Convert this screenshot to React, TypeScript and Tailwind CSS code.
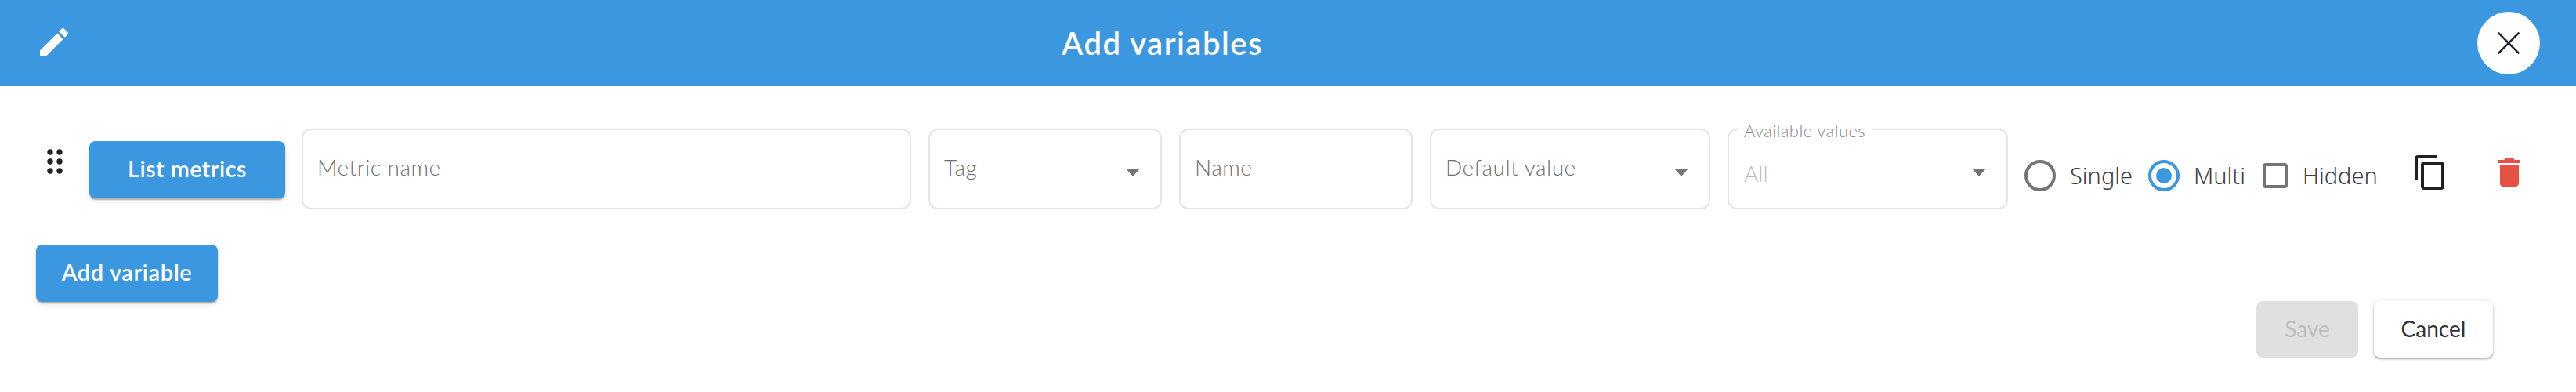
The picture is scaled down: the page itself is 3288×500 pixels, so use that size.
const sans = "font-['Lato','Liberation_Sans',sans-serif]";
const label = "font-['Noto_Sans',sans-serif] text-[29px] leading-10 font-light text-[#3d3d3d]";

function ArrowDown({ className }: { className: string }) {
  return <span className={`block h-0 w-0 border-x-[9px] border-t-[10px] border-x-transparent border-t-[#757575] ${className}`} />;
}

function Field({ label, width, select }: { label: string; width: string; select?: boolean }) {
  return (
    <div className={`flex h-[103px] items-start justify-between rounded-xl border-2 border-[#e4e4e4] pt-[30px] pr-[26px] pl-[18px] ${width}`}>
      <span className="text-[28px] leading-[34px] font-light tracking-[0.5px] text-[#6f6f6f]">{label}</span>
      {select && <ArrowDown className="mt-[19px]" />}
    </div>
  );
}

function AvailableValues() {
  return (
    <div className="relative flex h-[103px] w-[358px] items-start justify-between rounded-xl border-2 border-[#e4e4e4] pt-[38px] pr-[26px] pl-[19px]">
      <span className="absolute -top-[9px] left-[11px] bg-white px-2 text-[22px] leading-[20px] font-light tracking-[0.4px] text-[#8a8a8a]">Available values</span>
      <span className="text-[28px] leading-[34px] font-light text-[#bdbdbd]">All</span>
      <ArrowDown className="mt-[11px]" />
    </div>
  );
}

function Radio({ text, checked, width }: { text: string; checked?: boolean; width: string }) {
  return (
    <div className={`flex items-center gap-[18px] ${width}`}>
      <span className={`flex h-10 w-10 items-center justify-center rounded-full border-4 ${checked ? "border-[#3b97df]" : "border-[#757575]"}`}>
        {checked && <span className="h-5 w-5 rounded-full bg-[#3b97df]" />}
      </span>
      <span className={label}>{text}</span>
    </div>
  );
}

export default function App() {
  return (
    <div className={`h-[500px] w-[3288px] overflow-hidden bg-white ${sans}`}>
      <header className="flex h-[110px] items-center bg-[#3b97df] pr-[46px] pl-[45px]">
        <svg className="-mt-[2px]" width="48" height="48" viewBox="0 0 24 24" fill="#fff">
          <path d="M3 17.25V21h3.75L17.81 9.94l-3.75-3.75L3 17.25zM20.71 7.04c.39-.39.39-1.02 0-1.41l-2.34-2.34c-.39-.39-1.02-.39-1.41 0l-1.83 1.83 3.75 3.75 1.83-1.83z" />
        </svg>
        <h1 className="ml-[1262px] text-[40px] font-semibold tracking-[1.5px] text-white">Add variables</h1>
        <button className="ml-auto flex h-20 w-20 items-center justify-center rounded-full bg-white">
          <svg width="48" height="48" viewBox="0 0 24 24" stroke="#1f2430" strokeWidth="1.3">
            <path d="M5.3 5.3 18.7 18.7M18.7 5.3 5.3 18.7" />
          </svg>
        </button>
      </header>

      <div className="flex items-start pt-[54px] pl-[46px]">
        <svg className="mt-[26px] ml-[14px]" width="20" height="32" viewBox="0 0 20 32" fill="#212121">
          <circle cx="4" cy="4" r="3.7" /><circle cx="16" cy="4" r="3.7" />
          <circle cx="4" cy="16" r="3.7" /><circle cx="16" cy="16" r="3.7" />
          <circle cx="4" cy="28" r="3.7" /><circle cx="16" cy="28" r="3.7" />
        </svg>
        <button className="mt-[16px] ml-[34px] h-[73px] w-[250px] rounded-lg bg-[#3b97df] pb-[3px] text-[29px] font-semibold tracking-[0.4px] text-white shadow-[0_2px_2px_rgba(0,0,0,0.3),0_4px_10px_rgba(0,0,0,0.08)]">List metrics</button>
        <div className="ml-[21px] flex items-center gap-[22px]">
          <Field label="Metric name" width="w-[778px]" />
          <Field label="Tag" width="w-[298px]" select />
          <Field label="Name" width="w-[298px]" />
          <Field label="Default value" width="w-[358px]" select />
          <AvailableValues />
        </div>
        <div className="mt-[40px] ml-[21px] flex items-center">
          <Radio text="Single" width="w-[158px]" />
          <Radio text="Multi" checked width="w-[146px]" />
          <div className="flex w-[190px] items-center gap-[19px]">
            <span className="h-8 w-8 rounded border-4 border-[#757575]" />
            <span className={label}>Hidden</span>
          </div>
        </div>
        <div className="mt-[32px] flex gap-[53px]">
          <svg width="48" height="48" viewBox="0 0 24 24" fill="#212121">
            <path d="M16 1H4c-1.1 0-2 .9-2 2v14h2V3h12V1zm3 4H8c-1.1 0-2 .9-2 2v14c0 1.1.9 2 2 2h11c1.1 0 2-.9 2-2V7c0-1.1-.9-2-2-2zm0 16H8V7h11v14z" />
          </svg>
          <svg width="48" height="48" viewBox="0 0 24 24" fill="#e55244">
            <path d="M6 19c0 1.1.9 2 2 2h8c1.1 0 2-.9 2-2V7H6v12zM19 4h-3.5l-1-1h-5l-1 1H5v2h14V4z" />
          </svg>
        </div>
      </div>

      <div className="pt-[45px] pl-[46px]">
        <button className="h-[73px] w-[232px] rounded-lg bg-[#3b97df] pb-[3px] text-[29px] font-semibold tracking-[0.6px] text-white shadow-[0_2px_2px_rgba(0,0,0,0.3),0_4px_10px_rgba(0,0,0,0.08)]">Add variable</button>
      </div>

      <div className="-mt-px flex justify-end gap-5 pr-[106px]">
        <button className="h-[72px] w-[130px] rounded-lg bg-[#e0e0e0] pb-[3px] text-[28px] text-[#bdbdbd]">Save</button>
        <button className="h-[72px] w-[152px] rounded-lg bg-white pb-[3px] text-[28px] text-[#333] shadow-[0_2px_2px_rgba(0,0,0,0.3),0_0_6px_rgba(0,0,0,0.12)]">Cancel</button>
      </div>
    </div>
  );
}
